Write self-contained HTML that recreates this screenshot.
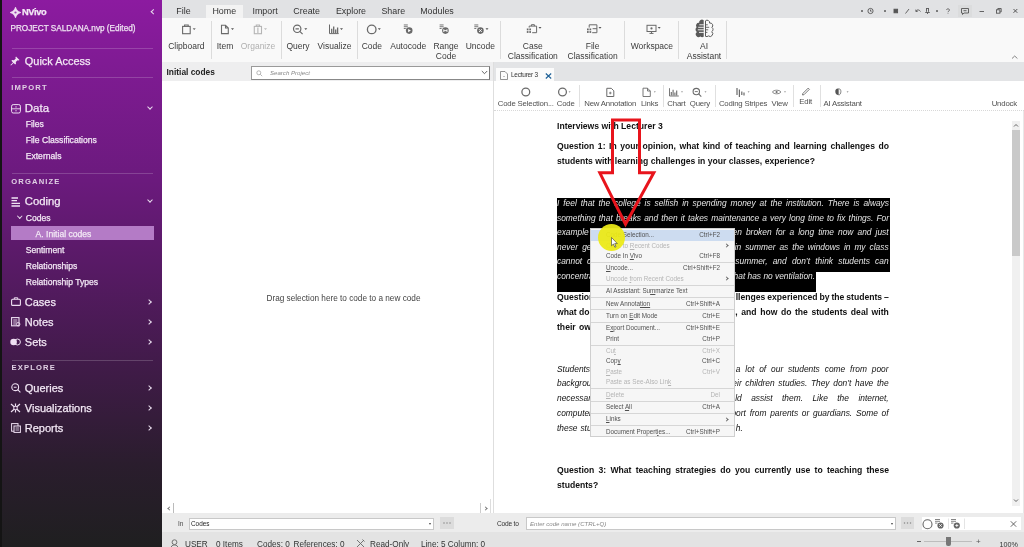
<!DOCTYPE html>
<html><head><meta charset="utf-8">
<style>
*{box-sizing:border-box;margin:0;padding:0}
html,body{width:1024px;height:547px;overflow:hidden;background:#e5e5e5;font-family:"Liberation Sans",sans-serif;position:relative}
.a{position:absolute;white-space:nowrap}
#sb{position:absolute;left:0;top:0;width:162px;height:547px;box-shadow:inset 2px 0 0 #141414;
background:linear-gradient(180deg,#8c1ba0 0%,#7f1b93 12%,#6b1a7d 33%,#561a63 50%,#3f1b47 68%,#2a1d2d 85%,#1f1f20 100%)}
#sb .a{color:#f3e8f5;-webkit-text-stroke:0.25px #f3e8f5}
.sep{position:absolute;left:12px;width:141px;height:1px;background:rgba(255,255,255,.18)}
.cap{font-size:7.6px;letter-spacing:1.15px;font-weight:bold;color:#e0d0e4!important;-webkit-text-stroke:0!important}
.big{font-size:11px}
.sm{font-size:8.6px}
.chev{position:absolute;left:147.5px;width:4px;height:4px;border-right:1px solid #e8dced;border-bottom:1px solid #e8dced;transform:rotate(45deg)}
.chr{position:absolute;left:146.5px;width:4px;height:4px;border-right:1px solid #e8dced;border-bottom:1px solid #e8dced;transform:rotate(-45deg)}
#top{position:absolute;left:162px;top:0;width:862px;height:18px;background:#e1e2e4}
.tab{position:absolute;top:6px;font-size:8.9px;color:#333;transform:translateX(-50%)}
#rib{position:absolute;left:162px;top:18px;width:862px;height:44px;background:#f9f9f9}
.rl{position:absolute;font-size:8.5px;color:#3a3a3a;text-align:center;line-height:10.1px;white-space:nowrap;transform:translateX(-50%)}
.vs{position:absolute;top:3px;width:1px;height:38px;background:#dcdcdc}
#mid{position:absolute;left:162px;top:62px;width:332px;height:451px;background:#fff}
#doc{position:absolute;left:494px;top:62px;width:530px;height:451px;background:#fff}
.tl{position:absolute;font-size:7.8px;letter-spacing:-0.2px;color:#505050;white-space:nowrap;transform:translateX(-50%)}
.dt{position:absolute;left:557px;width:332px;font-size:8.4px;color:#111;line-height:15px;text-align:justify;text-align-last:justify;white-space:normal;height:15px;overflow:visible}
.b{font-weight:bold;font-size:8.62px}
.it{font-style:italic}
#menu{position:absolute;left:590px;top:228.4px;width:145px;height:209px;background:#f6f6f6;border:1px solid #cfcfcf;padding-top:0.8px}
.mi{position:relative;height:10.4px;font-size:6.3px;color:#505050;line-height:10.4px;padding-left:15px;white-space:nowrap}
.mi .k{position:absolute;right:14px;top:0}
.mi.hl{background:#cddcf0}
.mi u{text-decoration-thickness:0.5px;text-underline-offset:1px}
.sa{position:absolute;right:6px;top:3.6px;width:3px;height:3px;border-right:1px solid #666;border-top:1px solid #666;transform:rotate(45deg)}
.mi.d{color:#b4b4b4}
.ms{height:2px;position:relative}
.ms:after{content:"";position:absolute;left:0;right:0;top:0.5px;height:1px;background:#d6d6d6}
#cb{position:absolute;left:162px;top:513px;width:862px;height:19px;background:#ececec}
#st{position:absolute;left:162px;top:532px;width:862px;height:15px;background:#e3e3e3}
.stt{position:absolute;top:8px;font-size:8.2px;color:#333;white-space:nowrap}
</style></head><body>
<div id="root" style="position:absolute;left:0;top:0;width:1024px;height:547px;background:#e5e5e5;will-change:transform">

<div id="sb">
<svg class="a" style="left:10px;top:6.5px" width="11" height="11" viewBox="0 0 11 11"><path d="M5.5 0.2 C6.2 2.8 8 4.6 10.8 5.5 C8 6.4 6.2 8.2 5.5 10.8 C4.8 8.2 3 6.4 0.2 5.5 C3 4.6 4.8 2.8 5.5 0.2Z" fill="#f0def3" stroke="#f0def3" stroke-width="0.8" stroke-linejoin="round"/><circle cx="5.5" cy="5.5" r="1.1" fill="#9a3fae"/></svg>
<div class="a" style="left:22px;top:6.8px;font-size:9.3px;font-weight:bold;letter-spacing:-0.35px">NVivo</div>
<div class="chr" style="left:152px;top:10px;transform:rotate(135deg);width:3.5px;height:3.5px"></div>
<div class="a sm" style="left:10.5px;top:23.5px;font-size:8.2px;color:#e8d9ec!important">PROJECT SALDANA.nvp (Edited)</div>
<div class="sep" style="top:48px"></div>
<svg class="a" style="left:10px;top:56px" width="10" height="10" viewBox="0 0 10 10"><path d="M6 0.5 L9.5 4 L8.6 4.6 L7.6 4.2 L5.8 6 L6 7.8 L5.2 8.6 L3.6 7 L1 9.6 L0.4 9 L3 6.4 L1.4 4.8 L2.2 4 L4 4.2 L5.8 2.4 L5.4 1.4Z" fill="#f0e3f3"/></svg>
<div class="a big" style="left:24.8px;top:55.3px;font-size:10.95px">Quick Access</div>
<div class="sep" style="top:77px"></div>
<div class="a cap" style="left:11.3px;top:83px">IMPORT</div>
<svg class="a" style="left:11px;top:103.5px" width="10" height="10" viewBox="0 0 10 10"><rect x="0.6" y="0.6" width="8.8" height="8.4" rx="1.6" fill="none" stroke="#eedff2" stroke-width="1"/><path d="M0.6 4.8H9.4M5 2.2V3.6M5 6V7.4" stroke="#eedff2" stroke-width="0.9"/></svg>
<div class="a big" style="left:24.8px;top:102px;font-size:11.5px">Data</div>
<div class="chev" style="top:105px"></div>
<div class="a sm" style="left:25.7px;top:119px">Files</div>
<div class="a sm" style="left:25.7px;top:135px">File Classifications</div>
<div class="a sm" style="left:25.7px;top:151px">Externals</div>
<div class="sep" style="top:173px"></div>
<div class="a cap" style="left:11.3px;top:176.6px">ORGANIZE</div>
<svg class="a" style="left:11px;top:197px" width="10" height="10" viewBox="0 0 10 10"><path d="M0.5 1H7M0.5 3.7H6M0.5 6.3H9M0.5 9H9" stroke="#f0e3f3" stroke-width="1.3"/></svg>
<div class="a big" style="left:24.8px;top:195px;font-size:11.3px">Coding</div>
<div class="chev" style="top:198px"></div>
<div class="chev" style="left:18px;top:214px;width:3.5px;height:3.5px"></div>
<div class="a sm" style="left:25.7px;top:213px">Codes</div>
<div class="a" style="left:11px;top:226px;width:143px;height:14px;background:#b47bc6"></div>
<div class="a sm" style="left:35.5px;top:229px">A. Initial codes</div>
<div class="a sm" style="left:25.7px;top:245px">Sentiment</div>
<div class="a sm" style="left:25.7px;top:261px">Relationships</div>
<div class="a sm" style="left:25.7px;top:277px">Relationship Types</div>
<svg class="a" style="left:11px;top:297px" width="10" height="9" viewBox="0 0 10 9"><rect x="0.6" y="2.2" width="8.8" height="6.2" rx="1" fill="none" stroke="#eedff2" stroke-width="1.1"/><path d="M3.3 2.2V0.8H6.7V2.2" fill="none" stroke="#eedff2" stroke-width="1"/></svg>
<div class="a big" style="left:24.8px;top:295.5px;font-size:11px">Cases</div>
<div class="chr" style="top:299.5px"></div>
<svg class="a" style="left:11px;top:317px" width="10" height="10" viewBox="0 0 10 10"><rect x="0.6" y="0.6" width="7.4" height="8.2" fill="none" stroke="#eedff2" stroke-width="1.1"/><path d="M2.2 3H6.4M2.2 5H6.4M2.2 7H5" stroke="#eedff2" stroke-width="0.9"/><circle cx="7.2" cy="7.2" r="1.7" fill="none" stroke="#eedff2" stroke-width="0.9"/></svg>
<div class="a big" style="left:24.8px;top:315.5px;font-size:11px">Notes</div>
<div class="chr" style="top:319.5px"></div>
<svg class="a" style="left:10px;top:338px" width="11" height="8" viewBox="0 0 11 8"><circle cx="3.6" cy="4" r="3.3" fill="#eedff2"/><circle cx="7.4" cy="4" r="3" fill="none" stroke="#eedff2" stroke-width="1"/></svg>
<div class="a big" style="left:24.8px;top:335.5px;font-size:11px">Sets</div>
<div class="chr" style="top:339.5px"></div>
<div class="sep" style="top:359.5px"></div>
<div class="a cap" style="left:11.6px;top:363.2px">EXPLORE</div>
<svg class="a" style="left:11px;top:383px" width="10" height="10" viewBox="0 0 10 10"><circle cx="4.2" cy="4.2" r="3.4" fill="none" stroke="#eedff2" stroke-width="1.1"/><path d="M6.7 6.7L9.4 9.4M2.8 4.2H5.6" stroke="#eedff2" stroke-width="1.1"/></svg>
<div class="a big" style="left:24.8px;top:381.5px;font-size:11px">Queries</div>
<div class="chr" style="top:385.5px"></div>
<svg class="a" style="left:10px;top:403px" width="11" height="10" viewBox="0 0 11 10"><path d="M1 1L10 9M10 1L1 9M5.5 0.5V9.5" stroke="#eedff2" stroke-width="1.2"/><circle cx="5.5" cy="5" r="1.8" fill="#3d1b45" stroke="#eedff2" stroke-width="1"/></svg>
<div class="a big" style="left:24.8px;top:401.5px;font-size:11px">Visualizations</div>
<div class="chr" style="top:405.5px"></div>
<svg class="a" style="left:11px;top:423px" width="10" height="10" viewBox="0 0 10 10"><rect x="0.6" y="0.6" width="6.4" height="7.6" fill="none" stroke="#eedff2" stroke-width="1"/><rect x="3" y="3" width="6.4" height="6.4" fill="#36203c" stroke="#eedff2" stroke-width="1"/><path d="M4.5 5H8M4.5 7H8" stroke="#eedff2" stroke-width="0.8"/></svg>
<div class="a big" style="left:24.8px;top:421.5px;font-size:11px">Reports</div>
<div class="chr" style="top:425.5px"></div>
</div>

<div id="top">
<div class="a" style="left:44px;top:5px;width:37px;height:13px;background:#f3f3f3"></div>
<div class="tab" style="left:21.5px">File</div>
<div class="tab" style="left:62.3px">Home</div>
<div class="tab" style="left:103.1px">Import</div>
<div class="tab" style="left:144.7px">Create</div>
<div class="tab" style="left:189.0px">Explore</div>
<div class="tab" style="left:231.3px">Share</div>
<div class="tab" style="left:275.0px">Modules</div>
<svg class="a" style="left:690px;top:5px" width="172" height="13" viewBox="0 0 172 13">
<g fill="none" stroke="#555" stroke-width="0.9">
<circle cx="10" cy="6" r="0.6" fill="#555"/>
<circle cx="18.5" cy="6" r="2.6"/><path d="M18.5 4.6V6.2H19.6"/>
<circle cx="33" cy="6" r="0.6" fill="#555"/>
<rect x="42" y="4.2" width="3.6" height="3.6" fill="#555"/>
<path d="M53.5 8.5L57 4"/>
<path d="M64 6.5C64.5 4.6 67 4.2 68.5 6.5M64 6.5L63.8 4.6M64 6.5L65.8 6.2"/>
<path d="M74 3.5H77M74.5 3.5V6.5L73.5 7.5H77.5L76.5 6.5V3.5M75.5 7.5V9"/>
<circle cx="85" cy="6" r="0.6" fill="#555"/>
<path d="M94.5 4.8C94.5 3.6 97.5 3.6 97.5 5C97.5 6 96 6 96 7.2M96 8.3V8.8"/>
</g>
<rect x="106" y="0" width="14" height="12" fill="#d6d6d6" opacity="0.5"/>
<g fill="none" stroke="#555" stroke-width="0.9">
<path d="M109.5 3.5H116.5V8H112L110.5 9.5V8H109.5Z"/><path d="M111.5 5.7H114.5"/>
<path d="M127.5 6.5H132"/>
<rect x="144.5" y="4.8" width="3.4" height="3.4"/><path d="M145.8 4.8V3.5H149.2V6.9H147.9"/>
<path d="M161.5 4L165.3 7.8M165.3 4L161.5 7.8" stroke-width="1"/>
</g></svg>
</div>
<div id="rib">
<div class="vs" style="left:48.5px"></div>
<div class="vs" style="left:118.5px"></div>
<div class="vs" style="left:194.5px"></div>
<div class="vs" style="left:337.5px"></div>
<div class="vs" style="left:461.5px"></div>
<div class="vs" style="left:516px"></div>
<div class="vs" style="left:564px"></div>
<svg class="a" style="left:0;top:0" width="862" height="44" viewBox="162 18 862 44">
<g fill="none" stroke="#6a6a6a" stroke-width="1.1">
<rect x="182.6" y="26.4" width="7.6" height="7.3"/><path d="M184.6 26.4V25H188.2V26.4"/>
<path d="M221.5 25.2H225.5L228.3 28V33.6H221.5Z M225.5 25.2V28H228.3"/>
</g>
<g fill="none" stroke="#b5b5b5" stroke-width="1.1"><rect x="254.3" y="26.4" width="7.2" height="7.3"/><path d="M256.3 26.4V25H259.5V26.4M257.9 27.5V33"/></g>
<g fill="none" stroke="#6a6a6a" stroke-width="1.2">
<circle cx="297.2" cy="28.8" r="3.7"/><path d="M299.8 31.4L302.6 34.2M295.5 28.8H298.9"/>
<path d="M329.5 24.5V33.6H338.7" stroke-width="1"/><path d="M331.7 33V28.8M333.7 33V26.5M335.7 33V29.5M337.6 33V27.4" stroke-width="1.3"/>
<circle cx="371.7" cy="29.4" r="4.3" stroke-width="1.3"/>
</g>
<g fill="#555">
<path d="M192.7 28.2H195.7L194.2 30.0Z M231.0 28.2H234.0L232.5 30.0Z M304.3 28.2H307.3L305.8 30.0Z M340.0 28.2H343.0L341.5 30.0Z M377.8 28.2H380.8L379.3 30.0Z M485.5 28.2H488.5L487.0 30.0Z M538.5 27.0H541.5L540.0 28.8Z M598.5 27.0H601.5L600.0 28.8Z M657.7 27.0H660.7L659.2 28.8Z"/>
<path d="M193 28.5H195L194 29.6Z" fill="#bbb"/>
</g>
<path d="M264 28.2H267L265.5 30Z" fill="#bbb"/>
<g fill="#6a6a6a">
<rect x="403.8" y="24.5" width="4" height="0.9"/><rect x="403.8" y="26.3" width="4" height="0.9"/><rect x="403.8" y="28.1" width="2" height="0.9"/>
<circle cx="409.2" cy="30.6" r="3.3"/>
<rect x="439.6" y="24.5" width="4" height="0.9"/><rect x="439.6" y="26.3" width="4" height="0.9"/><rect x="439.6" y="28.1" width="2" height="0.9"/>
<circle cx="445.4" cy="30.6" r="3.3"/>
<rect x="474.3" y="24.5" width="4" height="0.9"/><rect x="474.3" y="26.3" width="4" height="0.9"/><rect x="474.3" y="28.1" width="2" height="0.9"/>
<circle cx="480.4" cy="30.6" r="3.3"/>
</g>
<path d="M408.1 29L410.9 30.6L408.1 32.2Z" fill="#fff"/>
<path d="M443.8 29.2V32M447 29.2V32M443.8 30.6H447" stroke="#fff" stroke-width="0.9"/>
<path d="M479 29.2L481.8 32M481.8 29.2L479 32" stroke="#fff" stroke-width="0.9"/>
<g fill="none" stroke="#6a6a6a" stroke-width="1">
<path d="M529.2 27.6V26.1H536.6V32.7H532.2M531.4 26.1V24.7H534.4V26.1"/>
<path d="M589.2 27.6V24.8H596.9V32.7H592.2M592.6 28.7H596.9"/>
<g fill="#6a6a6a" stroke="none"><rect x="526.8" y="28.5" width="1.7" height="1.8"/><rect x="529.3" y="28.5" width="1.7" height="1.8"/><rect x="526.8" y="31.1" width="1.7" height="1.8"/><rect x="529.3" y="31.1" width="1.7" height="1.8"/>
<rect x="587" y="28.5" width="1.7" height="1.8"/><rect x="589.5" y="28.5" width="1.7" height="1.8"/><rect x="587" y="31.1" width="1.7" height="1.8"/><rect x="589.5" y="31.1" width="1.7" height="1.8"/></g>
<rect x="647" y="25.3" width="9" height="6.2"/><path d="M649.5 33.4H653.5M651.5 31.5V33.4"/><circle cx="651.5" cy="28.4" r="1.1" fill="#6a6a6a" stroke="none"/>
</g>
<path d="M703.7 20.3A2.8 2.8 0 0 0 699.1 22.8A2.8 2.8 0 0 0 696.6 27.3A2.8 2.8 0 0 0 696.9 31.9A2.8 2.8 0 0 0 700.4 36.4A2.8 2.8 0 0 0 703.7 36.7Z" fill="#5a5a5a"/>
<path d="M699.3 24.8H703.9M698.2 27.3H703.9M697.8 29.8H703.9M699 32.4H703.9" stroke="#fafafa" stroke-width="0.9"/>
<path d="M705.5 20.8A2.5 2.5 0 0 1 709.6 23.1A2.5 2.5 0 0 1 711.9 27.4A2.5 2.5 0 0 1 711.7 31.7A2.5 2.5 0 0 1 708.4 35.9A2.5 2.5 0 0 1 705.5 36.3Z" fill="none" stroke="#5a5a5a" stroke-width="1"/>
<path d="M705.5 24.8H707.8M705.5 27.3H709.2M705.5 29.8H708.2M705.5 32.4H707.4" stroke="#5a5a5a" stroke-width="0.9"/>
<path d="M1012 58.5L1014.7 56L1017.4 58.5" fill="none" stroke="#777" stroke-width="0.9"/>
</svg>
<div class="rl" style="left:24.4px;top:23px">Clipboard</div>
<div class="rl" style="left:63px;top:23px">Item</div>
<div class="rl" style="left:96px;top:23px;color:#b0b0b0">Organize</div>
<div class="rl" style="left:136px;top:23px">Query</div>
<div class="rl" style="left:172.5px;top:23px">Visualize</div>
<div class="rl" style="left:209.8px;top:23px">Code</div>
<div class="rl" style="left:246.2px;top:23px">Autocode</div>
<div class="rl" style="left:284px;top:23px">Range<br>Code</div>
<div class="rl" style="left:318.3px;top:23px">Uncode</div>
<div class="rl" style="left:370.8px;top:23px">Case<br>Classification</div>
<div class="rl" style="left:430.6px;top:23px">File<br>Classification</div>
<div class="rl" style="left:489.9px;top:23px">Workspace</div>
<div class="rl" style="left:542px;top:23px">AI<br>Assistant</div>
</div>
<div id="mid">
<div class="a" style="left:0;top:0;width:332px;height:18.5px;background:#eeeeef"></div>
<div class="a" style="left:4.5px;top:5px;font-size:8.4px;font-weight:bold;color:#222">Initial codes</div>
<div class="a" style="left:89px;top:4px;width:239px;height:14px;background:#fff;border:1px solid #9a9a9a;border-right-color:#777;border-bottom-color:#888"></div>
<svg class="a" style="left:93.5px;top:7.5px" width="7" height="7" viewBox="0 0 7 7"><circle cx="2.8" cy="2.8" r="2" fill="none" stroke="#999" stroke-width="0.7"/><path d="M4.3 4.3L6.2 6.2" stroke="#999" stroke-width="0.7"/></svg>
<div class="a" style="left:108px;top:7.3px;font-size:6.1px;font-style:italic;color:#8a8a8a">Search Project</div>

<svg class="a" style="left:319px;top:8px" width="7" height="5" viewBox="0 0 7 5"><path d="M0.8 1L3.5 3.7L6.2 1" fill="none" stroke="#555" stroke-width="0.9"/></svg>

<div class="a" style="left:104.5px;top:232px;font-size:8.22px;color:#444">Drag selection here to code to a new code</div>

<div class="a" style="left:5.5px;top:445px;width:3px;height:3px;border-left:1px solid #777;border-bottom:1px solid #777;transform:rotate(45deg)"></div>
<div class="a" style="left:11px;top:441px;width:1px;height:10px;background:#bbb"></div>
<div class="a" style="left:318px;top:441px;width:1px;height:10px;background:#ccc"></div>
<div class="a" style="left:321.5px;top:445px;width:3px;height:3px;border-right:1px solid #777;border-top:1px solid #777;transform:rotate(45deg)"></div>
<div class="a" style="left:328px;top:437px;width:1px;height:14px;background:#ddd"></div>
<div class="a" style="left:331px;top:0;width:1px;height:451px;background:#dedede"></div>
</div>
<div id="doc">
<div class="a" style="left:0;top:0;width:530px;height:19px;background:#e3e4e6"></div>
<div class="a" style="left:2.3px;top:6.2px;width:57.7px;height:12.8px;background:#fbfbfb"></div>
<svg class="a" style="left:6px;top:8.8px" width="8" height="9" viewBox="0 0 8 9"><path d="M0.5 0.5H5L7.5 3V8.5H0.5Z" fill="none" stroke="#777" stroke-width="0.8"/><path d="M3 5.5H5" stroke="#999" stroke-width="0.6"/></svg>
<div class="a" style="left:17px;top:8.6px;font-size:6.5px;color:#333;letter-spacing:-0.25px">Lecturer 3</div>
<svg class="a" style="left:50.5px;top:10.5px" width="7" height="6" viewBox="0 0 7 6"><path d="M0.8 0.5L6.2 5.5M6.2 0.5L0.8 5.5" stroke="#1d5f96" stroke-width="1.1"/></svg>
<div class="a" style="left:0;top:47.8px;width:530px;height:1px;border-top:1px dotted #d8d8d8"></div>
<svg class="a" style="left:0;top:18px" width="530" height="31" viewBox="494 80 530 31">
<g fill="none" stroke="#6a6a6a" stroke-width="1">
<circle cx="525.8" cy="92" r="3.9" stroke-width="1.25"/>
<circle cx="562.5" cy="92" r="3.9" stroke-width="1.25"/>
<path d="M606.8 88.3H611.3L613.8 90.8V96.5H606.8Z"/><path d="M609 93H611.6M610.3 91.7V94.3" stroke-width="0.8"/>
<path d="M643 88.2H647.5L650.3 91V96.5H643Z M647.5 88.2V91H650.3" stroke-width="0.9"/>
<path d="M669.5 88.2V96H678.8" stroke-width="0.9"/><path d="M671.3 95.5V92M673.1 95.5V89.7M674.9 95.5V92.5M676.7 95.5V90.6" stroke-width="1.1"/>
<circle cx="696.3" cy="91.6" r="3.2" stroke-width="1.1"/><path d="M698.6 93.9L701.3 96.6" stroke-width="1.1"/><path d="M694.8 91.6H697.8" stroke-width="0.9"/>
<path d="M737 88V95M739.4 89.5V97M741.8 91.5V95M744 92.5V95.5" stroke-width="1.2"/>
<path d="M772.3 92C774 89.6 779.3 89.6 781 92C779.3 94.4 774 94.4 772.3 92Z" stroke-width="0.8"/><circle cx="776.6" cy="92" r="1.1" fill="#6a6a6a" stroke="none"/>
<path d="M802.8 93.5L808.2 88.1L809.4 89.3L804 94.7L802.5 95Z" stroke-width="0.9"/>
</g>
<g fill="#666"><path d="M568.6 91.5H570.6L569.6 92.6Z M653.8 91.5H655.8L654.8 92.6Z M681 91.5H683L682 92.6Z M704.5 91.5H706.5L705.5 92.6Z M747.6 91.5H749.6L748.6 92.6Z M784 91.5H786L785 92.6Z M846.6 91.5H848.6L847.6 92.6Z"/></g>
<path d="M838 88.6C836 88.6 835.2 90 835.3 91.6C835.3 93.6 836.5 95 838.2 95Z" fill="#555"/><path d="M838.6 88.6C840.5 88.8 841 90.5 840.9 91.8C840.8 93.8 839.8 95 838.6 95Z" fill="none" stroke="#666" stroke-width="0.8"/>
</svg>
<div class="vs" style="left:84.5px;top:22.5px;height:22px;background:#e0e0e0"></div>
<div class="vs" style="left:169px;top:22.5px;height:22px;background:#e0e0e0"></div>
<div class="vs" style="left:221px;top:22.5px;height:22px;background:#e0e0e0"></div>
<div class="vs" style="left:298.9px;top:22.5px;height:22px;background:#e0e0e0"></div>
<div class="vs" style="left:325.6px;top:22.5px;height:22px;background:#e0e0e0"></div>
<div class="tl" style="left:31.8px;top:36.8px">Code Selection...</div>
<div class="tl" style="left:71.7px;top:36.8px">Code</div>
<div class="tl" style="left:116.2px;top:36.8px">New Annotation</div>
<div class="tl" style="left:155.5px;top:36.8px">Links</div>
<div class="tl" style="left:182.4px;top:36.8px">Chart</div>
<div class="tl" style="left:205.9px;top:36.8px">Query</div>
<div class="tl" style="left:249.1px;top:36.8px">Coding Stripes</div>
<div class="tl" style="left:285.6px;top:36.8px">View</div>
<div class="tl" style="left:311.7px;top:35.2px">Edit</div>
<div class="tl" style="left:348.6px;top:36.8px">AI Assistant</div>
<div class="tl" style="left:510.3px;top:36.8px">Undock</div>
<div class="a" style="left:518px;top:59px;width:8px;height:385px;background:#f0f0f0"></div>
<div class="a" style="left:518px;top:68px;width:8px;height:126px;background:#c9c9c9"></div>
<svg class="a" style="left:519px;top:61px" width="6" height="5" viewBox="0 0 6 5"><path d="M1 3.5L3 1.5L5 3.5" fill="none" stroke="#555" stroke-width="0.9"/></svg>
<svg class="a" style="left:519px;top:436px" width="6" height="5" viewBox="0 0 6 5"><path d="M1 1.5L3 3.5L5 1.5" fill="none" stroke="#555" stroke-width="0.9"/></svg>
<div class="a" style="left:529px;top:49px;width:1px;height:402px;background:#e8e8e8"></div>
</div>
<div class="a" style="left:557px;top:198px;width:332.5px;height:74px;background:#000"></div>
<div class="a" style="left:557px;top:272px;width:259px;height:19.7px;background:#000"></div>
<div class="dt b" style="top:118.75px;text-align-last:left;">Interviews with Lecturer 3</div>
<div class="dt b" style="top:138.85px;">Question 1: In your opinion, what kind of teaching and learning challenges do</div>
<div class="dt b" style="top:153.85px;text-align-last:left;">students with learning challenges in your classes, experience?</div>
<div class="dt it" style="top:195.85px;color:#e6e6e6;">I feel that the college is selfish in spending money at the institution. There is always</div>
<div class="dt it" style="top:210.50px;color:#e6e6e6;">something that breaks and then it takes maintenance a very long time to fix things. For</div>
<div class="dt it" style="top:225.15px;color:#e6e6e6;width:auto;text-align:left;text-align-last:left;white-space:nowrap;word-spacing:0.00px">example the windows</div>
<div class="dt it" style="top:225.15px;color:#e6e6e6;left:732.57px;width:auto;text-align:left;text-align-last:left;white-space:nowrap;word-spacing:1.75px">en broken for a long time now and just</div>
<div class="dt it" style="top:239.80px;color:#e6e6e6;width:auto;text-align:left;text-align-last:left;white-space:nowrap;word-spacing:1.85px">never get fixed.</div>
<div class="dt it" style="top:239.80px;color:#e6e6e6;left:734.69px;width:auto;text-align:left;text-align-last:left;white-space:nowrap;word-spacing:1.64px">in summer as the windows in my class</div>
<div class="dt it" style="top:254.45px;color:#e6e6e6;width:auto;text-align:left;text-align-last:left;white-space:nowrap;word-spacing:2.65px">cannot close the</div>
<div class="dt it" style="top:254.45px;color:#e6e6e6;left:735.36px;width:auto;text-align:left;text-align-last:left;white-space:nowrap;word-spacing:2.90px">summer, and don’t think students can</div>
<div class="dt it" style="top:269.15px;color:#e6e6e6;width:auto;text-align:left;text-align-last:left;white-space:nowrap;word-spacing:0.00px">concentrate properly</div>
<div class="dt it" style="top:269.15px;color:#e6e6e6;left:733.59px;width:auto;text-align:left;text-align-last:left;white-space:nowrap;word-spacing:0.00px">hat has no ventilation.</div>
<div class="dt b" style="top:290.15px;width:auto;text-align:left;text-align-last:left;white-space:nowrap;word-spacing:0.00px">Question 2: What</div>
<div class="dt b" style="top:290.15px;left:735.68px;width:auto;text-align:left;text-align-last:left;white-space:nowrap;word-spacing:-0.47px">llenges experienced by the students –</div>
<div class="dt b" style="top:305.05px;width:auto;text-align:left;text-align-last:left;white-space:nowrap;word-spacing:-0.03px">what do you</div>
<div class="dt b" style="top:305.05px;left:735.36px;width:auto;text-align:left;text-align-last:left;white-space:nowrap;word-spacing:1.15px">, and how do the students deal with</div>
<div class="dt b" style="top:319.95px;width:auto;text-align:left;text-align-last:left;white-space:nowrap;word-spacing:0.93px">their own challenges?</div>
<div class="dt it" style="top:361.55px;width:auto;text-align:left;text-align-last:left;white-space:nowrap;word-spacing:0.00px">Students have a</div>
<div class="dt it" style="top:361.55px;left:735.78px;width:auto;text-align:left;text-align-last:left;white-space:nowrap;word-spacing:2.61px">a lot of our students come from poor</div>
<div class="dt it" style="top:376.45px;width:auto;text-align:left;text-align-last:left;white-space:nowrap;word-spacing:0.00px">backgrounds where</div>
<div class="dt it" style="top:376.45px;left:732.37px;width:auto;text-align:left;text-align-last:left;white-space:nowrap;word-spacing:1.36px">eir children studies. They don’t have the</div>
<div class="dt it" style="top:391.35px;width:auto;text-align:left;text-align-last:left;white-space:nowrap;word-spacing:0.00px">necessary resources</div>
<div class="dt it" style="top:391.35px;left:735.19px;width:auto;text-align:left;text-align-last:left;white-space:nowrap;word-spacing:7.14px">ld assist them. Like the internet,</div>
<div class="dt it" style="top:406.25px;width:auto;text-align:left;text-align-last:left;white-space:nowrap;word-spacing:0.00px">computers and</div>
<div class="dt it" style="top:406.25px;left:731.46px;width:auto;text-align:left;text-align-last:left;white-space:nowrap;word-spacing:1.43px">port from parents or guardians. Some of</div>
<div class="dt it" style="top:421.15px;width:auto;text-align:left;text-align-last:left;white-space:nowrap;word-spacing:0.62px">these students live</div>
<div class="dt it" style="top:421.15px;left:735.80px;width:auto;text-align:left;text-align-last:left;white-space:nowrap;word-spacing:0.00px">h.</div>
<div class="dt b" style="top:463.15px;">Question 3: What teaching strategies do you currently use to teaching these</div>
<div class="dt b" style="top:478.15px;text-align-last:left;">students?</div>
<div id="menu">
<div class="mi hl">Code Selection...<span class="k">Ctrl+F2</span></div>
<div class="mi d">Code to <u>R</u>ecent Codes<span class="sa"></span></div>
<div class="mi ">Code In <u>V</u>ivo<span class="k">Ctrl+F8</span></div>
<div class="ms"></div>
<div class="mi "><u>U</u>ncode...<span class="k">Ctrl+Shift+F2</span></div>
<div class="mi d">Uncode <u>f</u>rom Recent Codes<span class="sa"></span></div>
<div class="ms"></div>
<div class="mi ">AI Assistant: Su<u>m</u>marize Text</div>
<div class="ms"></div>
<div class="mi ">New Annota<u>tion</u><span class="k">Ctrl+Shift+A</span></div>
<div class="ms"></div>
<div class="mi ">Turn on <u>E</u>dit Mode<span class="k">Ctrl+E</span></div>
<div class="ms"></div>
<div class="mi ">E<u>x</u>port Document...<span class="k">Ctrl+Shift+E</span></div>
<div class="mi ">Print<span class="k">Ctrl+P</span></div>
<div class="ms"></div>
<div class="mi d">Cu<u>t</u><span class="k">Ctrl+X</span></div>
<div class="mi ">Cop<u>y</u><span class="k">Ctrl+C</span></div>
<div class="mi d"><u>P</u>aste<span class="k">Ctrl+V</span></div>
<div class="mi d">Paste as See-Also Lin<u>k</u></div>
<div class="ms"></div>
<div class="mi d"><u>D</u>elete<span class="k">Del</span></div>
<div class="ms"></div>
<div class="mi ">Select <u>A</u>ll<span class="k">Ctrl+A</span></div>
<div class="ms"></div>
<div class="mi "><u>L</u>inks<span class="sa"></span></div>
<div class="ms"></div>
<div class="mi ">Document Propert<u>i</u>es...<span class="k">Ctrl+Shift+P</span></div>
</div>
<svg class="a" style="left:0;top:0" width="1024" height="547" viewBox="0 0 1024 547">
<path d="M612.5 120H639.5V172.8H653.8L625.5 224.2L599.8 172.8H612.5Z" fill="none" stroke="#e8141c" stroke-width="3" stroke-linejoin="miter" stroke-miterlimit="10"/>
</svg>
<div class="a" style="left:598px;top:224px;width:27px;height:27px;border-radius:50%;background:rgba(236,234,22,0.94)"></div>
<svg class="a" style="left:611px;top:237px" width="8" height="11" viewBox="0 0 8 11"><path d="M0.5 0.5V8.8L2.4 7L3.8 10.2L5 9.7L3.7 6.6H6.3Z" fill="#fff" stroke="#333" stroke-width="0.6"/></svg>
<div id="cb">
<div class="a" style="left:16px;top:7px;font-size:6.4px;color:#444">In</div>
<div class="a" style="left:26.5px;top:4.5px;width:245.5px;height:12.5px;background:#fff;border:1px solid #c8c8c8"></div>
<div class="a" style="left:29px;top:6.5px;font-size:6.4px;color:#222">Codes</div>
<div class="a" style="left:267px;top:10px;border-top:2px solid #444;border-left:1.5px solid transparent;border-right:1.5px solid transparent"></div>
<div class="a" style="left:277.5px;top:4px;width:14px;height:12px;background:#dcdcdc"></div>
<svg class="a" style="left:277.5px;top:4px" width="14" height="12" viewBox="0 0 14 12"><g fill="#888"><circle cx="4" cy="6" r="0.75"/><circle cx="7" cy="6" r="0.75"/><circle cx="10" cy="6" r="0.75"/></g></svg>
<div class="a" style="left:335px;top:6.5px;font-size:6.6px;color:#333;letter-spacing:-0.2px">Code to</div>
<div class="a" style="left:363.5px;top:4px;width:370px;height:13px;background:#fff;border:1px solid #c8c8c8"></div>
<div class="a" style="left:368px;top:6.5px;font-size:6.1px;font-style:italic;color:#888">Enter code name (CTRL+Q)</div>
<div class="a" style="left:729px;top:10px;border-top:2px solid #444;border-left:1.5px solid transparent;border-right:1.5px solid transparent"></div>
<div class="a" style="left:739px;top:4px;width:13px;height:12px;background:#dcdcdc"></div>
<svg class="a" style="left:739px;top:4px" width="13" height="12" viewBox="0 0 13 12"><g fill="#888"><circle cx="3.5" cy="6" r="0.75"/><circle cx="6.5" cy="6" r="0.75"/><circle cx="9.5" cy="6" r="0.75"/></g></svg>
<div class="a" style="left:759.5px;top:4px;width:99px;height:13px;background:#fff"></div>
<svg class="a" style="left:760px;top:4px" width="100" height="13" viewBox="922 517 100 13">
<circle cx="927.5" cy="524.3" r="4.5" fill="none" stroke="#666" stroke-width="1.1"/>
<path d="M935 519.5H940M935 521.3H940M935 523.1H937.5" stroke="#666" stroke-width="0.8"/><circle cx="940.5" cy="525.5" r="3.1" fill="#666"/><path d="M939.2 524.2L941.8 526.8M941.8 524.2L939.2 526.8" stroke="#fff" stroke-width="0.8"/>
<path d="M948.5 518.5V529" stroke="#ddd" stroke-width="0.8"/>
<path d="M951 519.5H956M951 521.3H956M951 523.1H953.5" stroke="#666" stroke-width="0.8"/><circle cx="956.8" cy="525.5" r="3.1" fill="#666"/><path d="M955.3 525.5H958.3M956.8 524V527" stroke="#fff" stroke-width="0.8"/>
<path d="M964.5 518.5V529" stroke="#ddd" stroke-width="0.8"/>
<path d="M1010.8 521.3L1016.2 526.7M1016.2 521.3L1010.8 526.7" stroke="#555" stroke-width="0.9"/>
</svg>
</div>
<div id="st">
<svg class="a" style="left:8px;top:6.5px" width="9" height="10" viewBox="0 0 9 10"><circle cx="4.5" cy="3.2" r="2.4" fill="none" stroke="#666" stroke-width="0.9"/><path d="M0.8 10C0.8 7 2.5 6 4.5 6S8.2 7 8.2 10" fill="none" stroke="#666" stroke-width="0.9"/></svg>
<div class="stt" style="left:23px">USER</div>
<div class="stt" style="left:54px">0 Items</div>
<div class="stt" style="left:95px">Codes: 0</div>
<div class="stt" style="left:131.5px">References: 0</div>
<svg class="a" style="left:194px;top:7px" width="9" height="9" viewBox="0 0 9 9"><path d="M1 1L8 8M8 1L1 8" stroke="#666" stroke-width="0.9"/><path d="M6.5 0.5L8.5 2.5" stroke="#666" stroke-width="0.9"/></svg>
<div class="stt" style="left:208px">Read-Only</div>
<div class="stt" style="left:259px">Line: 5 Column: 0</div>
<div class="a" style="left:755px;top:9px;width:4px;height:1px;background:#666"></div>
<div class="a" style="left:762px;top:9.3px;width:48px;height:1px;background:#bdbdbd"></div>
<div class="a" style="left:784px;top:5px;width:5px;height:9px;background:#777;border-radius:0 0 2px 2px"></div>
<div class="a" style="left:814px;top:4.5px;font-size:8px;color:#555">+</div>
<div class="stt" style="left:837.5px;top:8px;font-size:7.2px">100%</div>
</div>

</div>
</body></html>
